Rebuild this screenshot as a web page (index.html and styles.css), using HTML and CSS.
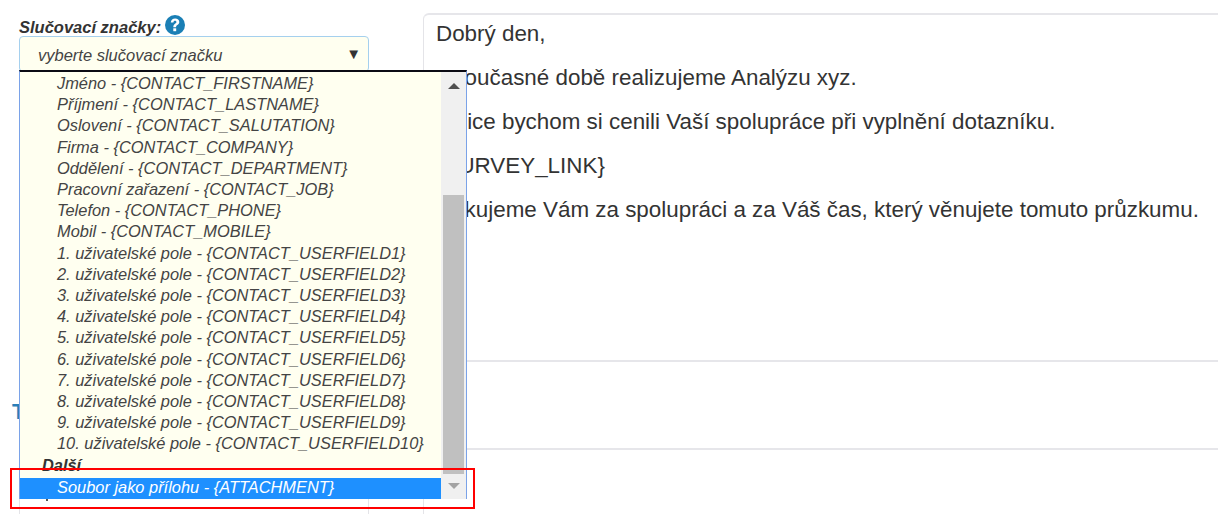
FILE: index.html
```html
<!DOCTYPE html>
<html lang="cs">
<head>
<meta charset="utf-8">
<title>Slučovací značky</title>
<link rel="stylesheet" href="styles.css">
</head>
<body>
<div class="page">
  <aside class="side">
    <div class="label-row">
      <span class="label">Slučovací značky:</span>
      <svg class="help" viewBox="0 0 20 20" aria-hidden="true"><circle cx="10" cy="10" r="10" fill="#1a7fb5"/><path d="M5.800 7.400C6 4.800 7.700 3.400 10.100 3.400c2.500 0 4.200 1.400 4.200 3.500 0 1.500-.8 2.400-2 3.200-1 .7-1.200 1.100-1.200 2.100H8.300c0-1.700.5-2.500 1.700-3.400 1-.7 1.400-1.100 1.400-1.800 0-.8-.6-1.300-1.400-1.300-1 0-1.500.6-1.600 1.700z" fill="#fff"/><rect x="8.300" y="13.300" width="2.900" height="2.900" fill="#fff"/></svg>
    </div>
    <div class="select">
      <span>vyberte slučovací značku</span>
      <span class="caret">▼</span>
    </div>
    <div class="box-below">
      <h2 class="hidden-heading">T</h2>
    </div>
    <div class="stray"></div>
    <div class="dropdown">
      <ul class="list">
        <li>Jméno - {CONTACT_FIRSTNAME}</li>
        <li>Příjmení - {CONTACT_LASTNAME}</li>
        <li>Oslovení - {CONTACT_SALUTATION}</li>
        <li>Firma - {CONTACT_COMPANY}</li>
        <li>Oddělení - {CONTACT_DEPARTMENT}</li>
        <li>Pracovní zařazení - {CONTACT_JOB}</li>
        <li>Telefon - {CONTACT_PHONE}</li>
        <li>Mobil - {CONTACT_MOBILE}</li>
        <li>1. uživatelské pole - {CONTACT_USERFIELD1}</li>
        <li>2. uživatelské pole - {CONTACT_USERFIELD2}</li>
        <li>3. uživatelské pole - {CONTACT_USERFIELD3}</li>
        <li>4. uživatelské pole - {CONTACT_USERFIELD4}</li>
        <li>5. uživatelské pole - {CONTACT_USERFIELD5}</li>
        <li>6. uživatelské pole - {CONTACT_USERFIELD6}</li>
        <li>7. uživatelské pole - {CONTACT_USERFIELD7}</li>
        <li>8. uživatelské pole - {CONTACT_USERFIELD8}</li>
        <li>9. uživatelské pole - {CONTACT_USERFIELD9}</li>
        <li>10. uživatelské pole - {CONTACT_USERFIELD10}</li>
        <li class="group">Další</li>
        <li class="active">Soubor jako přílohu - {ATTACHMENT}</li>
      </ul>
      <div class="scrollbar">
        <svg class="arrow" viewBox="0 0 12 6" aria-hidden="true"><path d="M0 6 6 0l6 6z" fill="#505050"/></svg>
        <div class="thumb"></div>
        <svg class="arrow down" viewBox="0 0 12 6" aria-hidden="true"><path d="M0 0l6 6 6-6z" fill="#a3a3a3"/></svg>
      </div>
    </div>
    <div class="highlight"></div>
  </aside>
  <main class="editor">
    <div class="editor-body">
      <p>Dobrý den,</p>
      <p>v současné době realizujeme Analýzu xyz.</p>
      <p>Velice bychom si cenili Vaší spolupráce při vyplnění dotazníku.</p>
      <p>{SURVEY_LINK}</p>
      <p>Děkujeme Vám za spolupráci a za Váš čas, který věnujete tomuto průzkumu.</p>
    </div>
    <div class="editor-row"></div>
    <div class="editor-rest"></div>
  </main>
</div>
</body>
</html>
```
FILE: styles.css
```css
* { box-sizing: border-box; }
html, body { margin: 0; height: 100%; overflow: hidden; background: #fff; }
body { font-family: "Liberation Sans", Arial, sans-serif; color: #333; }
.page { display: flex; height: 514px; padding-left: 19px; gap: 54px; overflow: hidden; }
.side { position: relative; z-index: 1; flex: 0 0 350px; padding-top: 14px; }
.label-row { display: flex; align-items: center; gap: 4px; height: 22px; }
.label { margin-top: 4px; font-size: 16.500px; font-weight: bold; font-style: italic; color: #333; }
.help { width: 20px; height: 20px; margin-top: -1px; }
.select { display: flex; justify-content: space-between; align-items: center; height: 36px; padding: 2px 7px 0 18px; background: #fffff0; border: 1px solid #a5d0ee; border-radius: 4px; font-size: 16.500px; font-style: italic; color: #444; }
.caret { margin-top: -4px; font-size: 15px; font-style: normal; color: #333; }
.box-below { height: 444px; padding-top: 327px; border-left: 1px solid #e4e4e8; border-right: 1px solid #e4e4e8; }
.hidden-heading { margin: 0 0 0 -8px; font-size: 22px; font-weight: bold; line-height: 26px; color: #2a7fb8; }
.stray { position: absolute; left: 27px; top: 499px; width: 2px; height: 2px; background: #555; }
.dropdown { position: absolute; left: 0; top: 70px; width: 448px; height: 429px; display: flex; background: #fffff0; border-top: 2px solid #0b0b14; border-left: 1px solid #7aa2e8; border-right: 1px solid #7aa2e8; }
.list { flex: 1; margin: 0; padding: 1px 0 0; list-style: none; font-size: 16.400px; font-style: italic; line-height: 21.2px; color: #444; }
.list li { padding-left: 37px; white-space: nowrap; }
.list .group { padding-left: 22px; font-weight: bold; color: #333; }
.list .active { margin-top: 2px; padding-bottom: 2px; line-height: 19px; background: #1e90ff; color: #fff; }
.scrollbar { flex: 0 0 25px; display: flex; flex-direction: column; align-items: center; background: #f0f0f0; }
.arrow { flex: 0 0 6px; width: 12px; height: 6px; margin: 11px 0 0; }
.arrow.down { margin: 9px 0 10px; }
.thumb { flex: 1; width: 21px; margin-top: 106px; background: #c0c0c0; }
.highlight { position: absolute; left: -9px; top: 468px; width: 465px; height: 41px; border: 2px solid #f00; }
.editor { flex: 1; min-width: 0; padding-top: 13px; display: flex; flex-direction: column; margin-right: -30px; }
.editor-body { height: 349px; padding: 0 12px; border-top: 2px solid #e6e6ea; border-left: 1px solid #e4e4e8; border-bottom: 2px solid #e6e6ea; border-top-left-radius: 6px; font-size: 22.400px; line-height: 44px; color: #333; }
.editor-body p { margin: 0; white-space: nowrap; }
.editor-body p:first-child { margin-top: -3px; }
.editor-row { height: 88px; border-left: 1px solid #e4e4e8; border-bottom: 2px solid #e6e6ea; }
.editor-rest { flex: 1; border-left: 1px solid #e4e4e8; }
```
